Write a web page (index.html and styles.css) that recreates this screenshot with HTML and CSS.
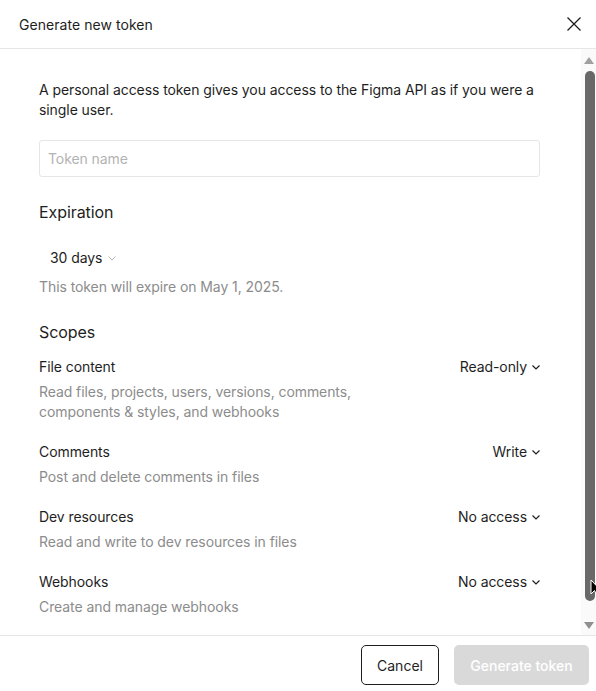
FILE: index.html
```html
<!DOCTYPE html>
<html lang="en">
<head>
<meta charset="utf-8">
<title>Generate new token</title>
<link rel="stylesheet" href="styles.css">
</head>
<body>
<div class="dialog">
  <header class="header">
    <h1 class="title">Generate new token</h1>
    <button class="close" aria-label="Close">
      <svg width="14" height="14" viewBox="0 0 14 14"><path d="M0.5 0.5L13.5 13.5M13.5 0.5L0.5 13.5" stroke="#1e1e1e" stroke-width="1.3" fill="none"/></svg>
    </button>
  </header>
  <div class="body">
    <div class="content">
      <p class="intro">A personal access token gives you access to the Figma API as if you were a single user.</p>
      <input class="input" type="text" placeholder="Token name">
      <h2 class="section-title expiration">Expiration</h2>
      <div class="select-row">
        <span class="select">30 days
          <svg class="chev light" width="8" height="5" viewBox="0 0 8 5"><path d="M0.5 0.5L4 4L7.5 0.5" stroke="#b3b3b3" stroke-width="1" fill="none"/></svg>
        </span>
      </div>
      <p class="muted expire">This token will expire on May 1, 2025.</p>
      <h2 class="section-title scopes">Scopes</h2>
      <div class="scope">
        <div class="scope-head"><span>File content</span><span class="scope-val">Read-only <svg class="chev" width="8" height="5" viewBox="0 0 8 5"><path d="M0.5 0.5L4 4L7.5 0.5" stroke="#1e1e1e" stroke-width="1.2" fill="none"/></svg></span></div>
        <p class="muted desc">Read files, projects, users, versions, comments,<br>components &amp; styles, and webhooks</p>
      </div>
      <div class="scope">
        <div class="scope-head"><span>Comments</span><span class="scope-val">Write <svg class="chev" width="8" height="5" viewBox="0 0 8 5"><path d="M0.5 0.5L4 4L7.5 0.5" stroke="#1e1e1e" stroke-width="1.2" fill="none"/></svg></span></div>
        <p class="muted desc">Post and delete comments in files</p>
      </div>
      <div class="scope">
        <div class="scope-head"><span>Dev resources</span><span class="scope-val">No access <svg class="chev" width="8" height="5" viewBox="0 0 8 5"><path d="M0.5 0.5L4 4L7.5 0.5" stroke="#1e1e1e" stroke-width="1.2" fill="none"/></svg></span></div>
        <p class="muted desc">Read and write to dev resources in files</p>
      </div>
      <div class="scope">
        <div class="scope-head"><span>Webhooks</span><span class="scope-val">No access <svg class="chev" width="8" height="5" viewBox="0 0 8 5"><path d="M0.5 0.5L4 4L7.5 0.5" stroke="#1e1e1e" stroke-width="1.2" fill="none"/></svg></span></div>
        <p class="muted desc">Create and manage webhooks</p>
      </div>
    </div>
    <div class="scrollbar">
      <svg class="arrow" width="12" height="9" viewBox="0 0 12 9"><path d="M6 1L11 8H1Z" fill="#a0a0a0"/></svg>
      <div class="thumb"></div>
      <svg class="arrow" width="12" height="9" viewBox="0 0 12 9"><path d="M1 1H11L6 8Z" fill="#8f8f8f"/></svg>
      <svg class="cursor" width="10" height="18" viewBox="0 0 10 18"><path d="M1 1V15L4.5 11.5L7 17L9 16L6.5 10.5H10Z" fill="#000" stroke="#fff" stroke-width="1"/></svg>
    </div>
  </div>
  <footer class="footer">
    <button class="btn btn-secondary">Cancel</button>
    <button class="btn btn-primary" disabled>Generate token</button>
  </footer>
</div>
</body>
</html>
```
FILE: styles.css
```css
* { box-sizing: border-box; }
html, body { margin: 0; padding: 0; background: #fff; }
body {
  font-family: Inter, "Noto Sans", sans-serif;
  font-size: 14px;
  letter-spacing: -0.08px;
  color: #1e1e1e;
  overflow: hidden;
}
.dialog {
  width: 596px;
  height: 691px;
  display: flex;
  flex-direction: column;
}
.header {
  height: 49px;
  flex: none;
  display: flex;
  align-items: center;
  justify-content: space-between;
  padding: 0 15px 0 19px;
  border-bottom: 1px solid #e6e6e6;
}
.title {
  margin: 2px 0 0;
  font-size: 14px;
  font-weight: 400;
  letter-spacing: 0.05px;
  line-height: 20px;
}
.close {
  border: 0;
  background: none;
  padding: 0;
  width: 14px;
  height: 14px;
  display: flex;
  margin-top: -1px;
}
.body {
  height: 586px;
  flex: none;
  display: flex;
  overflow: hidden;
}
.content {
  flex: 1;
  padding: 31px 41px 0 39px;
  display: flex;
  flex-direction: column;
}
.intro {
  margin: 0;
  line-height: 20px;
}
.input {
  margin-top: 20px;
  height: 37px;
  width: 100%;
  border: 1px solid #e6e6e6;
  border-radius: 3px;
  padding: 0 8px;
  font-family: inherit;
  font-size: 14px;
  letter-spacing: -0.08px;
  color: #1e1e1e;
  outline: none;
}
.input::placeholder { color: #b3b3b3; }
.section-title {
  margin: 0;
  font-size: 16px;
  font-weight: 400;
  line-height: 22px;
}
.expiration { margin-top: 24px; }
.select-row {
  height: 32px;
  margin-top: 19px;
  display: flex;
  align-items: center;
  padding-left: 11px;
}
.select { display: inline-flex; align-items: center; gap: 6px; line-height: 20px; }
.chev { flex: none; }
.muted {
  margin: 0;
  color: #8c8c8c;
  line-height: 20px;
}
.expire { margin-top: 3px; }
.scopes { margin-top: 24px; }
.scope { margin-top: 14px; }
.scope + .scope { margin-top: 20px; }
.scope-head {
  display: flex;
  justify-content: space-between;
  align-items: center;
  line-height: 20px;
}
.scope-val { display: inline-flex; align-items: center; gap: 5px; }
.desc { margin-top: 5px; }
.scrollbar {
  position: relative;
  width: 15px;
  flex: none;
  background: #fafafa;
  display: flex;
  flex-direction: column;
  align-items: center;
  padding: 7px 0 5px;
}
.arrow { flex: none; margin-left: 1px; }
.thumb {
  flex: 1;
  width: 10px;
  margin: 6px 0 20px 2px;
  background: #686868;
  border-radius: 5px;
}
.cursor {
  position: absolute;
  left: 9px;
  top: 530px;
}
.footer {
  flex: 1;
  display: flex;
  justify-content: flex-end;
  align-items: flex-start;
  gap: 15px;
  padding: 9px 7px 0 0;
  border-top: 1px solid #e6e6e6;
}
.btn {
  height: 40px;
  border-radius: 5px;
  font-family: inherit;
  font-size: 14px;
  font-weight: 500;
  padding: 0 8px;
}
.btn-secondary {
  width: 78px;
  background: #fff;
  border: 1px solid #1e1e1e;
  color: #1e1e1e;
  font-weight: 400;
}
.btn-primary {
  width: 135px;
  background: #d9d9d9;
  border: 0;
  color: #fff;
}
```
